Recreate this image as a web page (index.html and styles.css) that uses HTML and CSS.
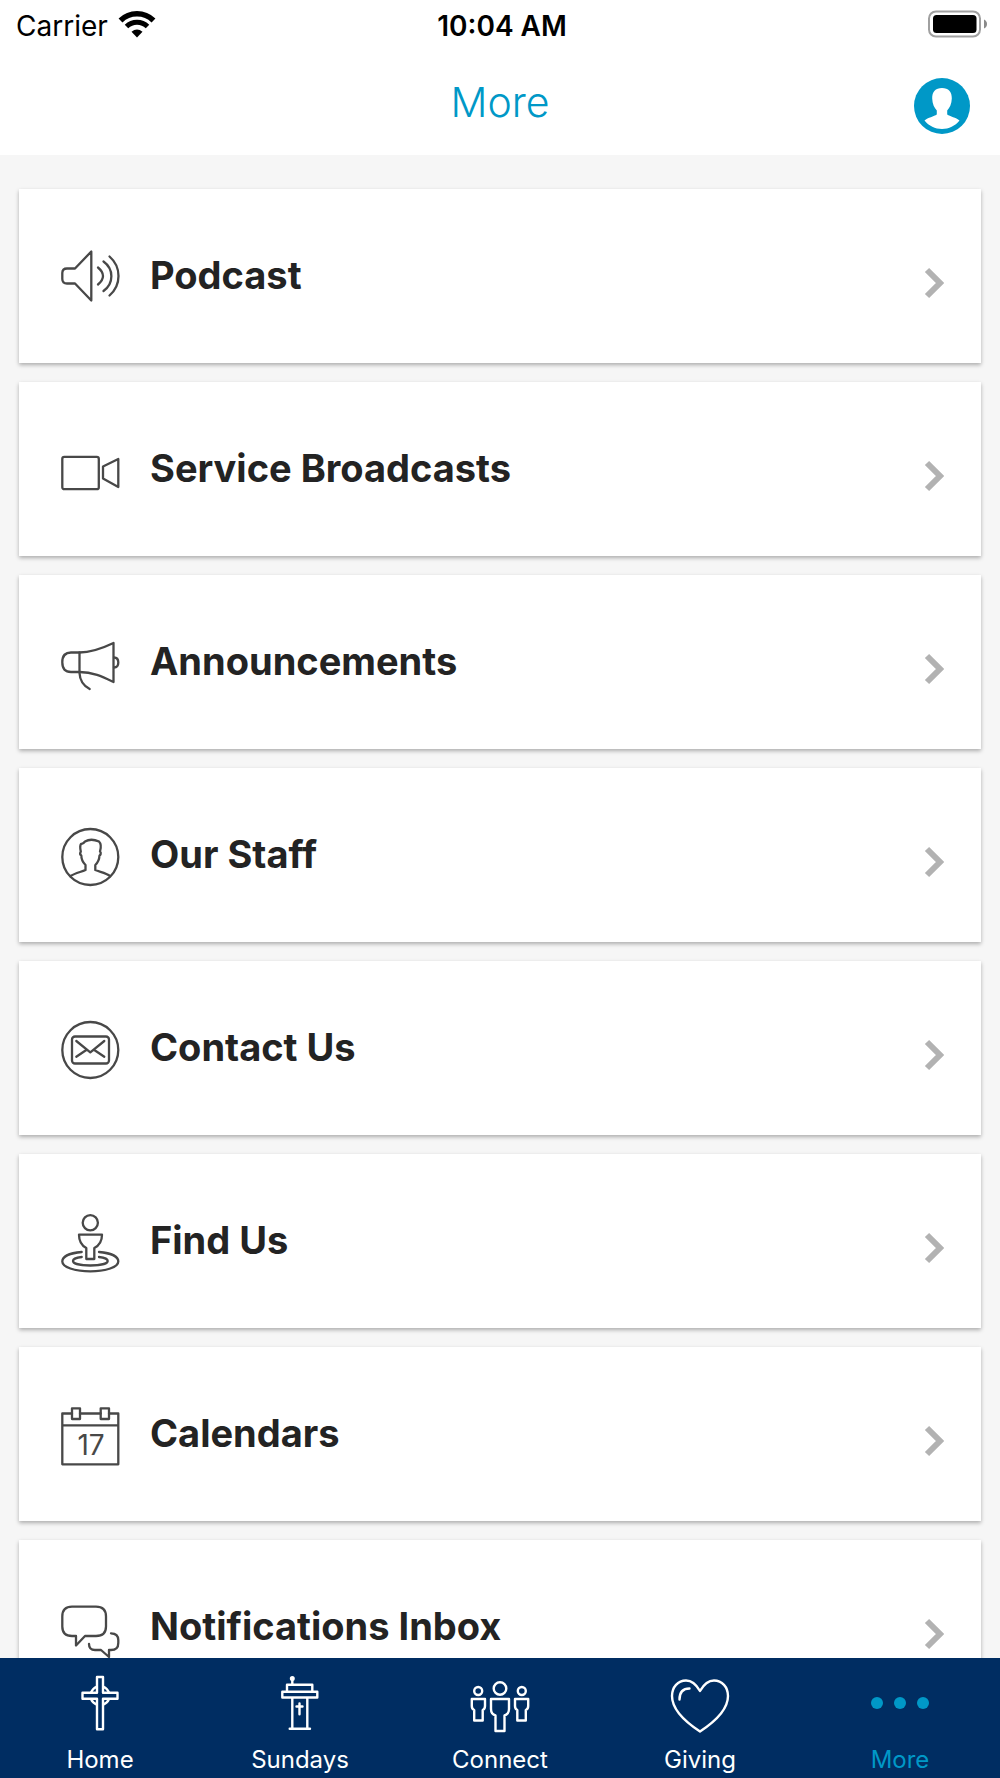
FILE: index.html
```html
<!DOCTYPE html>
<html lang="en">
<head>
<meta charset="utf-8">
<meta name="viewport" content="width=device-width, initial-scale=1">
<title>More</title>
<link rel="stylesheet" href="styles.css">
</head>
<body>
<div class="app">
  <div class="status">
    <div class="status-carrier">
      <span>Carrier</span>
      <svg class="wifi" width="38" height="28" viewBox="0 0 38 28" aria-hidden="true">
        <path d="M2.500 10.500A23.500 23.500 0 0 1 35.500 10.500" fill="none" stroke="#000" stroke-width="5.500"/>
        <path d="M8.500 16.500A15 15 0 0 1 29.500 16.500" fill="none" stroke="#000" stroke-width="5"/>
        <path d="M19 27.500L13.500 21.800Q19 17 24.500 21.800Z"/>
      </svg>
    </div>
    <time class="status-time">10:04 AM</time>
    <svg class="battery" width="60" height="28" viewBox="0 0 60 28" aria-hidden="true">
      <rect x="1" y="1.500" width="51" height="25" rx="7" fill="none" stroke="#a0a0a0" stroke-width="2"/>
      <rect x="5" y="5" width="43.500" height="18" rx="3.500"/>
      <path d="M56 9.500Q59 11 59 14T56 18.500Z" fill="#8a8a8a"/>
    </svg>
  </div>

  <header class="header">
    <h1 class="title">More</h1>
    <button class="profile" type="button" aria-label="Profile">
      <svg width="56" height="56" viewBox="0 0 56 56" aria-hidden="true">
        <circle cx="28" cy="28" r="28" fill="#0098c7"/>
        <path d="M28 10C21.500 10 18 14 18.200 20.500C18.300 26 20.500 30 22.800 32.500V36.500C20 38.500 14 39.500 10.500 42.500C15 48 21 51 28 51S41 48 45.500 42.500C42 39.500 36 38.500 33.200 36.500V32.500C35.500 30 37.700 26 37.800 20.500C38 14 34.500 10 28 10Z" fill="#fff"/>
      </svg>
    </button>
  </header>

  <main class="content">
    <ul class="list">
      <li><a class="card" href="#podcast">
        <svg class="icon" viewBox="0 0 60 60" aria-hidden="true">
          <path d="M31.300 3.500V52.500L15 35.500H7Q2.300 35.500 2.300 31V25Q2.300 20.500 7 20.500H15Z"/>
          <path d="M38 19.500Q48 28 38 36.500M43.500 13.500C54 21 54 35.500 43.500 43M49.500 8.500C61.500 19 61.500 37 49.500 47.500"/>
        </svg>
        <span class="label">Podcast</span>
        <svg class="chevron" viewBox="0 0 20 32" aria-hidden="true"><path d="M3 3L16 16L3 29"/></svg>
      </a></li>
      <li><a class="card" href="#broadcasts">
        <svg class="icon" viewBox="0 0 60 60" aria-hidden="true">
          <rect x="2.300" y="15.800" width="36.500" height="32.400" rx="2"/>
          <path d="M43 25.500L58.300 18V46L43 37.500Z"/>
        </svg>
        <span class="label">Service Broadcasts</span>
        <svg class="chevron" viewBox="0 0 20 32" aria-hidden="true"><path d="M3 3L16 16L3 29"/></svg>
      </a></li>
      <li><a class="card" href="#announcements">
        <svg class="icon" viewBox="0 0 60 60" aria-hidden="true">
          <path d="M53.500 9C42 14.500 32 18.500 19.500 18.500H11C5.500 18.500 2.300 21 2.300 28.300S5.500 38 11 38H19.500C33 38 43 43 53.500 48Z"/>
          <path d="M19.500 18.500V39Q20 50 29.700 55M54 23.500Q58.300 23.500 58.300 28.500T54 33.500"/>
        </svg>
        <span class="label">Announcements</span>
        <svg class="chevron" viewBox="0 0 20 32" aria-hidden="true"><path d="M3 3L16 16L3 29"/></svg>
      </a></li>
      <li><a class="card" href="#staff">
        <svg class="icon" viewBox="0 0 60 60" aria-hidden="true">
          <circle cx="30.300" cy="30" r="28"/>
          <path d="M10.500 49C15 46 21 45 25.500 43V38C22 34.500 21.300 31 21.300 28.500C19.500 27.500 20 26 20.800 24.500C20 21 20 18.500 21 17Q23 17.200 25 14.500Q31 11 39 14.500C41.500 17 41 21 40 24.500C41.500 26 40.500 28 39.500 28.500C39.300 32 38 35.500 35.300 38V43C40 45 46 46 50 49"/>
        </svg>
        <span class="label">Our Staff</span>
        <svg class="chevron" viewBox="0 0 20 32" aria-hidden="true"><path d="M3 3L16 16L3 29"/></svg>
      </a></li>
      <li><a class="card" href="#contact">
        <svg class="icon" viewBox="0 0 60 60" aria-hidden="true">
          <circle cx="30.300" cy="30" r="28"/>
          <rect x="12" y="16.500" width="37" height="27" rx="3"/>
          <path d="M16.300 21L30.300 32.300L44.300 21M16.300 36.700L26.300 30M44.300 36.700L34.300 30"/>
        </svg>
        <span class="label">Contact Us</span>
        <svg class="chevron" viewBox="0 0 20 32" aria-hidden="true"><path d="M3 3L16 16L3 29"/></svg>
      </a></li>
      <li><a class="card" href="#find-us">
        <svg class="icon" viewBox="0 0 60 60" aria-hidden="true">
          <circle cx="30.300" cy="9.700" r="7.600"/>
          <path d="M19 21.700H42Q42 31 34.300 35V46H26.300V35Q19 31 19 21.700Z"/>
          <path d="M21.700 39C10 40 2.300 43.500 2.300 48.500C2.300 54 14.500 58.300 30.300 58.300S58.300 54 58.300 48.500C58.300 43.500 50.500 40 39 39"/>
          <path d="M21.700 44Q13 45 13 48C13 50.500 20 52.500 30.300 52.500S47.700 50.500 47.700 48Q47.700 45 39 44"/>
        </svg>
        <span class="label">Find Us</span>
        <svg class="chevron" viewBox="0 0 20 32" aria-hidden="true"><path d="M3 3L16 16L3 29"/></svg>
      </a></li>
      <li><a class="card" href="#calendars">
        <svg class="icon" viewBox="0 0 60 60" aria-hidden="true">
          <path d="M12 7.500H2.300V58.300H58.300V7.500H49M20 7.500H40.700M2.300 19.300H58.300"/>
          <path d="M12 2.300H20V13H12ZM40.700 2.300H49V13H40.700Z"/>
          <text class="icon-date" x="31" y="49" text-anchor="middle">17</text>
        </svg>
        <span class="label">Calendars</span>
        <svg class="chevron" viewBox="0 0 20 32" aria-hidden="true"><path d="M3 3L16 16L3 29"/></svg>
      </a></li>
      <li><a class="card" href="#inbox">
        <svg class="icon" viewBox="0 0 60 60" aria-hidden="true">
          <path d="M12 7.700H36Q46 7.700 46 17.500V27.500Q46 37 36 37H25L16 46.500V37H12Q2.300 37 2.300 27.500V17.500Q2.300 7.700 12 7.700Z"/>
          <path d="M51 34.300Q58.300 34.500 58.300 41V44Q58.300 51 51 51H49V58L41 51H35Q29 51 29 45"/>
        </svg>
        <span class="label">Notifications Inbox</span>
        <svg class="chevron" viewBox="0 0 20 32" aria-hidden="true"><path d="M3 3L16 16L3 29"/></svg>
      </a></li>
    </ul>
  </main>

  <nav class="tabs" aria-label="Main">
    <a class="tab" href="#home">
      <svg class="tab-icon" viewBox="0 0 60 60" aria-hidden="true">
        <circle cx="30" cy="22.700" r="9.500"/>
        <path class="solid-ground" d="M27 4H33V19.700H47.500V25.700H33V56.300H27V25.700H12.500V19.700H27Z"/>
      </svg>
      <span>Home</span>
    </a>
    <a class="tab" href="#sundays">
      <svg class="tab-icon" viewBox="0 0 60 60" aria-hidden="true">
        <circle cx="22.300" cy="5.500" r="1.300"/>
        <path d="M22.300 6V11.500M17 18.500V11.700H42.300V18.500M12.300 18.700H47.300V24.500H12.300ZM22.300 24.500V55.500M37.300 24.500V55.500M19.700 55.700H40M29.500 30.500V41.300M26.500 33.500H32.500"/>
      </svg>
      <span>Sundays</span>
    </a>
    <a class="tab" href="#connect">
      <svg class="tab-icon" viewBox="0 0 60 60" aria-hidden="true">
        <circle cx="30" cy="15.500" r="6.300"/>
        <circle cx="8.200" cy="18" r="4"/>
        <circle cx="51.800" cy="18" r="4"/>
        <path d="M21 26H39V36Q39 41 34.500 42.500V58H25.500V42.500Q21 41 21 36ZM1.800 26H15V33Q15 36 12.700 37V47.500H4.200V37Q1.800 36 1.800 33ZM45 26H58.200V33Q58.200 36 55.800 37V47.500H47.300V37Q45 36 45 33Z"/>
      </svg>
      <span>Connect</span>
    </a>
    <a class="tab" href="#giving">
      <svg class="tab-icon" viewBox="0 0 60 60" aria-hidden="true">
        <path d="M30 18C26 11 22 7.500 16 7.500C8 7.500 2 14 2 23C2 35 14 48 30 58.500C46 48 58 35 58 23C58 14 52 7.500 44 7.500C38 7.500 34 11 30 18Z"/>
        <path d="M19.500 15.500Q9.500 15.500 9.500 26.500"/>
      </svg>
      <span>Giving</span>
    </a>
    <a class="tab tab-active" href="#more" aria-current="page">
      <svg class="tab-icon tab-icon-dots" viewBox="0 0 60 60" aria-hidden="true">
        <circle cx="7" cy="30" r="6"/><circle cx="30" cy="30" r="6"/><circle cx="53" cy="30" r="6"/>
      </svg>
      <span>More</span>
    </a>
  </nav>
</div>
</body>
</html>
```
FILE: styles.css
```css
* {
  box-sizing: border-box;
}

body {
  margin: 0;
  background: #f6f6f6;
  color: #232323;
  font-family: Inter, "Liberation Sans", sans-serif;
}

a {
  color: inherit;
  text-decoration: none;
}

.app {
  display: flex;
  flex-direction: column;
  height: 100vh;
}

.status {
  display: grid;
  grid-template-columns: 1fr auto 1fr;
  align-items: center;
  flex: none;
  padding: 10px 12px 0 16px;
  background: #fff;
  color: #000;
  font-size: 28px;
  line-height: 32px;
}

.status-carrier {
  display: flex;
  align-items: center;
  gap: 10px;
}

.wifi,
.battery {
  display: block;
  margin-bottom: 4px;
}

.battery {
  justify-self: end;
}

.status-time {
  font-weight: 600;
}

.header {
  display: grid;
  grid-template-columns: 1fr auto 1fr;
  align-items: end;
  flex: none;
  padding: 28px 30px 21px;
  background: #fff;
}

.title {
  grid-column: 2;
  margin: 0;
  color: #0098c7;
  font-size: 41px;
  font-weight: 300;
  line-height: 64px;
}

.profile {
  justify-self: end;
  width: 56px;
  height: 56px;
  padding: 0;
  border: 0;
  border-radius: 50%;
  background: none;
}

.profile svg {
  display: block;
}

.content {
  flex: 1;
  min-height: 0;
  overflow: hidden;
  padding: 34px 19px 0;
}

.list {
  display: flex;
  flex-direction: column;
  gap: 19px;
  margin: 0;
  padding: 0;
  list-style: none;
}

.card {
  display: flex;
  align-items: center;
  gap: 30px;
  height: 174px;
  padding: 0 37px 0 41px;
  background: #fff;
  box-shadow: 0 2px 4px rgba(0, 0, 0, 0.3);
}

.icon {
  flex: none;
  width: 60px;
  height: 60px;
  margin-top: 4px;
  fill: none;
  stroke: #484848;
  stroke-width: 2.3;
  stroke-linecap: round;
  stroke-linejoin: round;
}

.icon-date {
  fill: #484848;
  stroke: none;
  font-size: 28px;
  font-weight: 400;
}

.label {
  flex: 1;
  padding-bottom: 2px;
  font-size: 38px;
  font-weight: 700;
  line-height: 48px;
}

.chevron {
  flex: none;
  width: 20px;
  height: 32px;
  margin-top: 13px;
  fill: none;
  stroke: #b2b2b2;
  stroke-width: 6;
}

.tabs {
  display: grid;
  grid-template-columns: repeat(5, 1fr);
  flex: none;
  padding: 15px 0 4px;
  background: #002d62;
  color: #fff;
}

.tab {
  display: flex;
  flex-direction: column;
  align-items: center;
  gap: 13px;
  font-size: 24px;
  line-height: 28px;
}

.tab-active {
  color: #0098c7;
}

.tab-icon {
  width: 60px;
  height: 60px;
  fill: none;
  stroke: currentColor;
  stroke-width: 2.4;
  stroke-linecap: round;
  stroke-linejoin: round;
}

.solid-ground {
  fill: #002d62;
}

.tab-icon-dots {
  fill: currentColor;
  stroke: none;
}
```
